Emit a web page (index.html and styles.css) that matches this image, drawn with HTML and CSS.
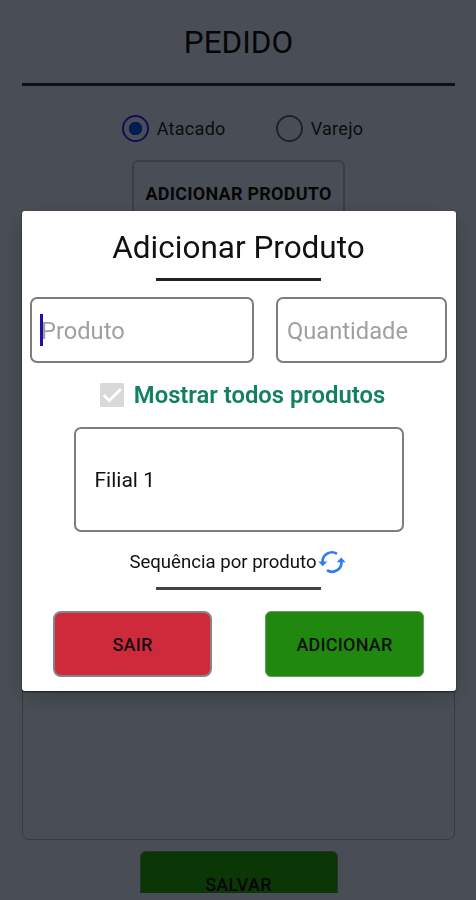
FILE: index.html
```html
<!DOCTYPE html>
<html lang="pt-BR">
<head>
  <meta charset="UTF-8" />
  <meta name="viewport" content="width=device-width, initial-scale=1.0" />
  <title>Pedido</title>
  <link rel="stylesheet" href="styles.css">
</head>
<body>
  <main class="pedido">
    <h1>PEDIDO</h1>
    <div class="tipo-venda">
      <label class="opcao"><span class="radio marcado"></span>Atacado</label>
      <label class="opcao"><span class="radio"></span>Varejo</label>
    </div>
    <button class="btn-produto">ADICIONAR PRODUTO</button>
    <div class="lista-produtos"></div>
    <button class="btn-salvar">SALVAR</button>
  </main>

  <div class="overlay">
    <div class="modal">
      <h2>Adicionar Produto</h2>
      <hr class="linha" />

      <div class="campos">
        <div class="campo produto"><span class="cursor"></span>Produto</div>
        <div class="campo quantidade">Quantidade</div>
      </div>

      <label class="mostrar-todos">
        <svg class="check" viewBox="0 0 24 24">
          <rect width="24" height="24" rx="1.5" fill="#d9d9d9" />
          <path d="M3.6 12L9.3 17.6L20.7 6.2" fill="none" stroke="#fff" stroke-width="2.8" />
        </svg>
        Mostrar todos produtos
      </label>

      <div class="filial">Filial 1</div>

      <div class="sequencia">
        <span>Sequência por produto</span>
        <svg class="icon" viewBox="0 0 28 24" fill="none" stroke="#2f7bf5" stroke-width="2.6">
          <path d="M4.6 12.5A9.4 9.4 0 0 1 19 3.8" />
          <path d="M23.4 11A9.4 9.4 0 0 1 9 20.2" />
          <path d="M0.3 11.4H9.3L4.8 16.2Z" fill="#2f7bf5" stroke="none" />
          <path d="M18.7 12.2H27.7L23.2 7.4Z" fill="#2f7bf5" stroke="none" />
        </svg>
      </div>
      <hr class="linha inferior" />

      <div class="acoes">
        <button class="btn sair">SAIR</button>
        <button class="btn adicionar">ADICIONAR</button>
      </div>
    </div>
  </div>
</body>
</html>
```
FILE: styles.css
```css
* {
  margin: 0;
  padding: 0;
  box-sizing: border-box;
  font-family: Roboto, sans-serif;
}

body {
  background: #b7c4d7;
  color: #111;
  height: 900px;
  overflow: hidden;
}

.pedido {
  height: 893px;
  padding: 0 21px 0 22px;
  display: flex;
  flex-direction: column;
  align-items: center;
  overflow: hidden;
}

h1 {
  width: 100%;
  height: 86px;
  flex-shrink: 0;
  border-bottom: 3px solid #222833;
  font-size: 31.5px;
  font-weight: 400;
  line-height: 85px;
  text-align: center;
}

.tipo-venda {
  display: flex;
  gap: 50px;
  margin-top: 29px;
  margin-left: 8px;
}

.opcao {
  display: flex;
  align-items: center;
  gap: 8px;
  height: 27px;
  font-size: 18px;
  letter-spacing: 0.3px;
  color: #222;
}

.radio {
  width: 27px;
  height: 27px;
  border: 2.5px solid #555;
  border-radius: 50%;
}

.radio.marcado {
  border-color: #2d20d8;
  background: radial-gradient(circle, #0847cf 6.5px, transparent 7px);
}

.btn-produto {
  width: 213px;
  height: 66px;
  flex-shrink: 0;
  margin-top: 18px;
  border: 2px solid #959fac;
  border-radius: 6px;
  background: transparent;
  color: #111;
  font-size: 18px;
  font-weight: 700;
  letter-spacing: 0.25px;
}

.lista-produtos {
  width: 100%;
  height: 600px;
  flex-shrink: 0;
  margin-top: 14px;
  border: 1px solid #8a919b;
  border-radius: 7px;
}

.btn-salvar {
  width: 198px;
  height: 66px;
  flex-shrink: 0;
  margin-top: 11px;
  border: 1px solid #687a68;
  border-radius: 6px;
  background: #1c870d;
  color: #111;
  font-size: 18px;
  font-weight: 500;
  letter-spacing: 0.25px;
}

.overlay {
  position: fixed;
  inset: 0;
  padding: 211px 20px 0 22px;
  background: rgba(0, 0, 0, 0.6);
}

.modal {
  display: flex;
  flex-direction: column;
  align-items: center;
  height: 480px;
  padding-right: 1px;
  border-radius: 3px;
  background: #fff;
  box-shadow: 0 8px 24px rgba(0, 0, 0, 0.2), 0 1px 2px rgba(0, 0, 0, 0.6);
}

h2 {
  height: 67px;
  font-size: 31.5px;
  font-weight: 400;
  line-height: 74px;
}

.linha {
  width: 165px;
  height: 3px;
  border: none;
  background: #222;
}

.campos {
  display: flex;
  gap: 22px;
  margin-top: 16px;
}

.campo {
  display: flex;
  align-items: center;
  height: 66px;
  padding: 2px 9px 0;
  border: 2px solid #7d7d7d;
  border-radius: 7px;
  color: #a0a0a0;
  font-size: 23.7px;
}

.produto {
  position: relative;
  width: 224px;
}

.cursor {
  position: absolute;
  left: 8px;
  top: 15px;
  width: 3px;
  height: 32px;
  background: #1a12a8;
}

.quantidade {
  width: 171px;
}

.mostrar-todos {
  display: flex;
  align-items: center;
  gap: 10px;
  height: 28px;
  margin-top: 18px;
  margin-left: 8px;
  color: #138062;
  font-size: 23.8px;
  font-weight: 600;
}

.check {
  width: 24px;
  height: 24px;
}

.filial {
  display: flex;
  align-items: center;
  width: 330px;
  height: 105px;
  margin-top: 18px;
  padding-left: 19px;
  border: 2px solid #7d7d7d;
  border-radius: 7px;
  font-size: 21px;
}

.sequencia {
  display: flex;
  align-items: center;
  gap: 1px;
  height: 28px;
  margin-top: 16px;
  margin-right: 2px;
  font-size: 18.6px;
}

.icon {
  width: 28px;
  height: 24px;
}

.linha.inferior {
  margin-top: 11px;
  background: #444;
}

.acoes {
  display: flex;
  gap: 53px;
  margin-top: 21px;
}

.btn {
  width: 159px;
  height: 66px;
  padding-top: 1px;
  border: 2px solid #858585;
  border-radius: 8px;
  color: #111;
  font-size: 18px;
  font-weight: 500;
  letter-spacing: 0.2px;
}

.sair {
  background: #cf2a3b;
}

.adicionar {
  border: 1px solid #62a05c;
  border-radius: 6px;
  background: #20870f;
}
```
